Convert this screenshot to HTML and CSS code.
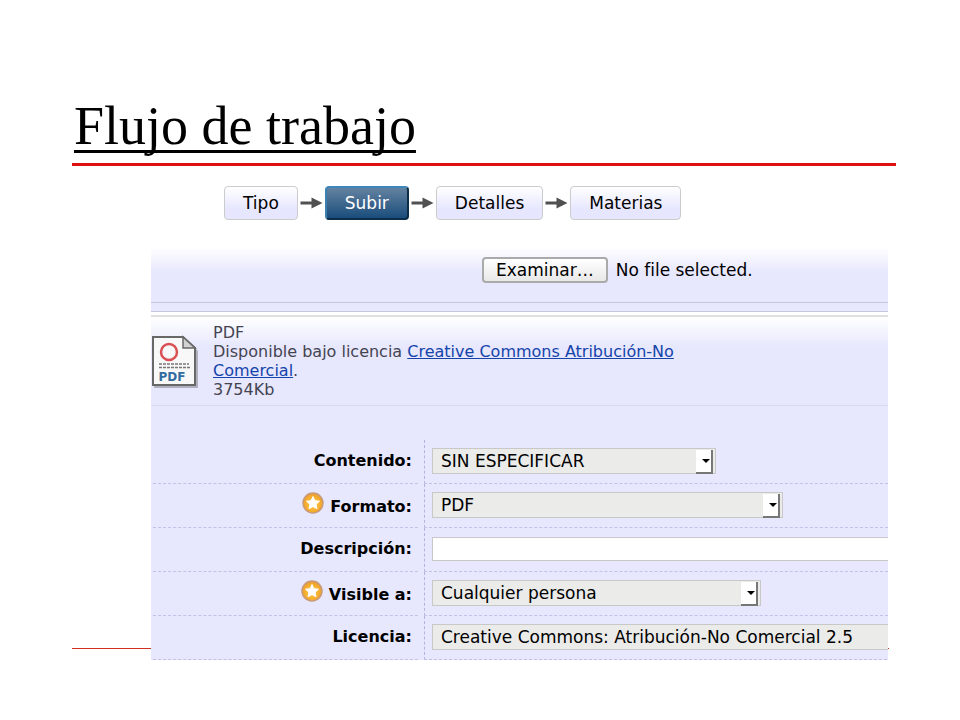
FILE: index.html
```html
<!DOCTYPE html>
<html lang="es">
    <head>
        <meta charset="UTF-8" />
        <meta name="viewport" content="width=device-width, initial-scale=1.0" />
        <title>Flujo de trabajo</title>
        <link rel="stylesheet" href="styles.css">
    </head>
    <body>
        <svg width="0" height="0" class="defs">
            <defs>
                <radialGradient id="gold" cx="50%" cy="55%" r="55%">
                    <stop offset="0" stop-color="#ffd04a" />
                    <stop offset="0.7" stop-color="#f5ab2e" />
                    <stop offset="1" stop-color="#e59a35" />
                </radialGradient>
                <symbol id="star" viewBox="0 0 22 22">
                    <circle cx="11" cy="11" r="10" fill="url(#gold)" stroke="#c89a78" stroke-width="1.5" />
                    <path fill="#fff" stroke="#fff" stroke-linejoin="round" d="M11 4.5l1.9 4.2 4.6.5-3.4 3.1.9 4.5-4-2.3-4 2.3.9-4.5-3.4-3.1 4.6-.5z" />
                </symbol>
                <symbol id="arrow" viewBox="0 0 22 12">
                    <path fill="#505050" d="M0 4.500h11V.5l11 5.500-11 5.500V7.500H0z" />
                </symbol>
            </defs>
        </svg>
        <header class="title">
            <h1>Flujo de trabajo</h1>
        </header>
        <nav class="steps">
            <button type="button" class="step">Tipo</button>
            <svg class="arrow"><use href="#arrow" /></svg>
            <button type="button" class="step active">Subir</button>
            <svg class="arrow"><use href="#arrow" /></svg>
            <button type="button" class="step">Detalles</button>
            <svg class="arrow"><use href="#arrow" /></svg>
            <button type="button" class="step">Materias</button>
        </nav>
        <main class="content">
            <form class="panel">
                <div class="upload">
                    <button type="button" class="browse">Examinar…</button>
                    <span>No file selected.</span>
                </div>
                <div class="strip"></div>
                <div class="document">
                    <svg class="pdf-icon" viewBox="0 0 48 54">
                        <path fill="#8c8c98" opacity="0.6" d="M3 4h32l12 12v37H3z" />
                        <path fill="#f8f8f8" stroke="#686868" stroke-width="2" d="M2 2h30l12 11v37H2z" />
                        <path fill="#d2d2d2" stroke="#686868" stroke-width="1.5" d="M32 2v11h12z" />
                        <circle cx="18" cy="17" r="8" fill="none" stroke="#d95055" stroke-width="2.5" />
                        <path stroke="#777" stroke-width="1.5" stroke-dasharray="3 1" d="M8 29h30M8 32.5h31" />
                        <text x="21" y="46" text-anchor="middle">PDF</text>
                    </svg>
                    <div class="info">
                        PDF<br>
                        Disponible bajo licencia <a href="#">Creative Commons Atribución-No Comercial</a>.<br>
                        3754Kb
                    </div>
                </div>
                <div class="fields">
                    <div class="row">
                        <div class="name"><label for="contenido">Contenido:</label></div>
                        <div class="value">
                            <div class="select medium">
                                <select id="contenido"><option>SIN ESPECIFICAR</option></select>
                            </div>
                        </div>
                    </div>
                    <div class="row">
                        <div class="name required">
                            <svg class="star"><use href="#star" /></svg>
                            <label for="formato">Formato:</label>
                        </div>
                        <div class="value">
                            <div class="select large">
                                <select id="formato"><option>PDF</option></select>
                            </div>
                        </div>
                    </div>
                    <div class="row">
                        <div class="name"><label for="descripcion">Descripción:</label></div>
                        <div class="value">
                            <input type="text" id="descripcion">
                        </div>
                    </div>
                    <div class="row">
                        <div class="name required">
                            <svg class="star"><use href="#star" /></svg>
                            <label for="visible">Visible a:</label>
                        </div>
                        <div class="value">
                            <div class="select wide">
                                <select id="visible"><option>Cualquier persona</option></select>
                            </div>
                        </div>
                    </div>
                    <div class="row">
                        <div class="name"><label for="licencia">Licencia:</label></div>
                        <div class="value">
                            <div class="select full">
                                <select id="licencia"><option>Creative Commons: Atribución-No Comercial 2.5</option></select>
                            </div>
                        </div>
                    </div>
                </div>
            </form>
        </main>
    </body>
</html>
```
FILE: styles.css
```css
* {
    box-sizing: border-box;
}
body {
    margin: 0;
    padding: 96px 64px 0 72px;
    background-color: #fff;
    color: #000;
    font-family: 'DejaVu Sans', sans-serif;
    font-size: 17px;
}
.defs {
    position: absolute;
}
.title {
    border-bottom: 3px solid #e01010;
}
h1 {
    margin: 0;
    padding: 0 2px 6px;
    font-family: 'Liberation Serif', serif;
    font-size: 54px;
    font-weight: normal;
    line-height: 61px;
    text-decoration: underline;
    text-decoration-thickness: 3px;
    text-underline-offset: 6px;
    text-decoration-skip-ink: none;
}
.steps {
    display: flex;
    align-items: center;
    gap: 2px;
    padding: 20px 0 27px 152px;
}
.step {
    height: 34px;
    padding: 0 18px;
    border: 1px solid #ccc;
    border-radius: 4px;
    background: linear-gradient(#fff, #e6e6ff 70%);
    color: #000;
    font: inherit;
}
.step.active {
    border: 2px solid;
    border-color: #3c88bb #0c2c47 #0c2c47 #3c80b0;
    background: linear-gradient(#6482a0, #1a4d7c);
    color: #fff;
}
.arrow {
    width: 23px;
    height: 12px;
}
.content {
    position: relative;
    padding: 0 8px 0 79px;
}
/* footer rule, runs behind the panel */
.content::before {
    content: '';
    position: absolute;
    left: 0;
    right: 7px;
    bottom: 11px;
    height: 1px;
    background-color: #d03020;
}
.panel {
    position: relative;
    overflow: hidden;
    background-color: #e7e7fe;
}
.upload {
    display: flex;
    align-items: center;
    gap: 8px;
    height: 56px;
    padding: 0 0 9px 331px;
    border-bottom: 1px solid #c6c6dc;
    background: linear-gradient(#fff, #e7e7fe 26px);
}
.browse {
    height: 26px;
    padding: 0 12px;
    border: 2px solid #aaa;
    border-radius: 4px;
    background: linear-gradient(#fff, #e8e8e8);
    color: #000;
    font: inherit;
    line-height: 20px;
}
.strip {
    height: 14px;
    border-top: 8px solid #e7e7fe;
    border-bottom: 2px solid #e0e0e0;
    background: linear-gradient(#c6c6dc 1px, #fff 1px);
}
.document {
    display: flex;
    gap: 14px;
    height: 89px;
    padding-top: 6px;
    border-bottom: 1px solid #dadaee;
    background: linear-gradient(#fff, #e7e7fe 30px);
}
.pdf-icon {
    flex: none;
    width: 48px;
    height: 54px;
    margin-top: 12px;
}
.pdf-icon text {
    fill: #326ca0;
    font-size: 12px;
    font-weight: bold;
}
.info {
    width: 500px;
    color: #444450;
    font-size: 16px;
    line-height: 19px;
}
.info a {
    color: #1444aa;
}
.fields {
    padding: 34px 0 0 2px;
}
.row {
    display: grid;
    grid-template-columns: 265px 1fr;
    gap: 6px;
    height: 44px;
}
.name,
.value {
    display: flex;
    align-items: center;
    border-bottom: 1px dashed #c2c2e6;
}
.name {
    justify-content: flex-end;
    gap: 6px;
    padding: 0 6px 2px 0;
    font-size: 16px;
    font-weight: bold;
}
.required {
    padding: 2px 6px 0 0;
}
.star {
    width: 22px;
    height: 22px;
    margin-bottom: 8px;
}
.value {
    padding: 0 0 2px 7px;
    border-left: 1px dashed #b4b4dc;
}
.select {
    position: relative;
}
.select::before {
    content: '';
    position: absolute;
    top: 2px;
    right: 3px;
    width: 15px;
    height: 22px;
    border: solid #777;
    border-width: 0 2px 2px 0;
    background-color: #fff;
    pointer-events: none;
}
.select::after {
    content: '';
    position: absolute;
    top: 11px;
    right: 6px;
    border: 4px solid transparent;
    border-top-color: #000;
    border-bottom: 0;
    pointer-events: none;
}
select,
input {
    display: block;
    width: 100%;
    height: 26px;
    margin: 0;
    padding: 0 8px;
    border: 1px solid #c8c8c8;
    border-radius: 0;
    background-color: #ebebea;
    color: #000;
    font: inherit;
    appearance: none;
}
input {
    height: 24px;
    border-right: 0;
    background-color: #fff;
}
.medium {
    width: 284px;
}
.wide {
    width: 329px;
}
.large {
    width: 351px;
}
/* longer than the panel, its arrow is cut off */
.full {
    flex: none;
    width: 480px;
}
```
